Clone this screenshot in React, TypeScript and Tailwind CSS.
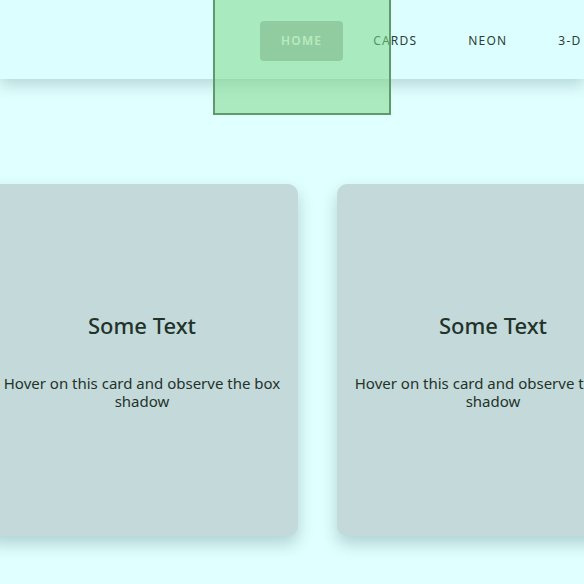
import React from 'react';

const links = ['HOME', 'CARDS', 'NEON', '3-D'];

const Card: React.FC = () => (
  <div className="w-[312px] h-[352px] shrink-0 bg-[#c4d9da] rounded-[10px] shadow-[0_8px_16px_rgba(40,80,80,0.25)] flex flex-col items-center justify-center text-center text-[#1f332b]">
    <h2 className="text-[22px] leading-[28px] font-medium">Some Text</h2>
    <p className="mt-[35px] text-[15px] leading-[18px] px-[16px]">Hover on this card and observe the box shadow</p>
  </div>
);

const App: React.FC = () => {
  return (
    <div className="w-[584px] h-[584px] overflow-hidden bg-[#e0ffff] relative" style={{ fontFamily: '"Noto Sans", "Open Sans", sans-serif' }}>
      {/* Navbar */}
      <nav className="h-[79px] bg-[#dcfefe] shadow-[0_6px_14px_rgba(60,100,100,0.25)] flex items-center pl-[260px] pt-[3px] relative z-10">
        <ul className="flex gap-[9px] shrink-0">
          {links.map((l, i) => (
            <li
              key={l}
              className={
                i === 0
                  ? 'px-[21px] h-[40px] flex items-center rounded-[4px] bg-[#a4bcbc] text-white text-[12px] tracking-[1.2px] font-semibold'
                  : 'px-[21px] h-[40px] flex items-center text-[#2a3f36] text-[12px] tracking-[1.2px]'
              }
            >
              {l}
            </li>
          ))}
        </ul>
      </nav>

      {/* Cards */}
      <div className="flex gap-[39px] ml-[-14px] mt-[105px]">
        <Card />
        <Card />
      </div>

      {/* selection overlay */}
      <div className="absolute left-[213px] top-[-2px] w-[178px] h-[117px] border-2 border-[#5e9a6a] bg-[#80d989]/55 z-20" />
    </div>
  );
};

export default App;
